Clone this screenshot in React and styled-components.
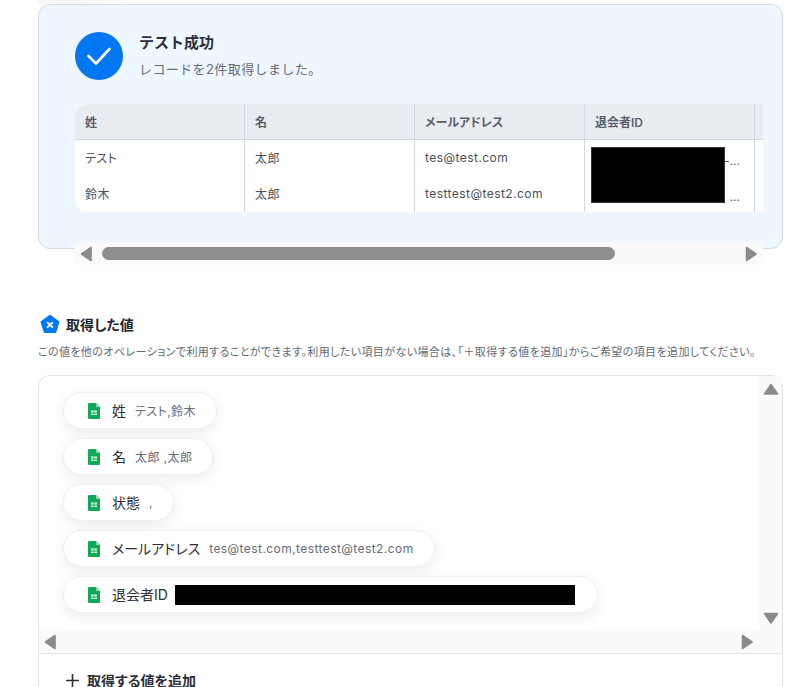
import React from "react";
import styled, { createGlobalStyle } from "styled-components";

const Global = createGlobalStyle`
  html, body { margin: 0; padding: 0; background: #fff; }
  body { font-family: Inter, "Noto Sans CJK JP", sans-serif; color: #2d3340; font-feature-settings: "palt"; }
  * { box-sizing: border-box; }
`;
const Page = styled.div`
  width: 808px; height: 687px; overflow: hidden; padding: 0 25px 0 38px;
`;
const TopShade = styled.div`
  height: 4px; width: 110px; background: linear-gradient(to right, #f6f6f6, #fafafa 70%, #fff);
`;
const Card = styled.section`
  position: relative; height: 245px; border: 1px solid #d3dbe5; border-radius: 12px;
  background: #eef6ff; padding: 27px 19px 0 36px;
`;
const Head = styled.div`display: flex; align-items: center; gap: 16px; height: 48px;`;
const CheckBadge = styled.div`
  width: 48px; height: 48px; border-radius: 50%; background: #0477f2;
  display: flex; align-items: center; justify-content: center;
`;
const HeadText = styled.div`display: flex; flex-direction: column; gap: 6px;`;
const Title = styled.div`font-size: 15px; line-height: 20px; font-weight: 600; color: #2a2f3a; font-feature-settings: normal;`;
const Sub = styled.div`font-size: 13px; line-height: 20px; color: #666c78; letter-spacing: 0.4px; font-feature-settings: normal;`;
const TableWrap = styled.div`
  margin-top: 24px; width: 688px; height: 108px; overflow: hidden; background: #fff;
  border-radius: 12px 0 0 12px;
`;
const Row = styled.div`
  display: grid; grid-template-columns: repeat(4, 170px) 8px; height: ${p => p.$h}px;
  background: ${p => (p.$head ? "#e9ecf1" : "transparent")};
  border-bottom: ${p => (p.$head ? "1px solid #d3d9e2" : "0")};
`;
const Cell = styled.div`
  border-right: ${p => (p.$last ? "0" : "1px solid #d3d9e2")};
  padding: 0 0 ${p => (p.$head ? 1 : 2)}px 10px; font-size: 12px; display: flex; align-items: center;
  font-weight: ${p => (p.$head ? 600 : 400)};
  color: ${p => (p.$head ? "#5a606b" : "#4b505b")};
  letter-spacing: ${p => (p.$head ? 0 : 0.45)}px;
`;
const Ellipsis = styled(Cell)`justify-content: flex-end; padding: 4px 14px 0 0; color: #555b66; letter-spacing: 0;`;
const Redact = styled.div`
  position: absolute; left: 552px; top: 142px; width: 134px; height: 56px; background: #000;
  border: 1px solid #333;
`;
const HBar = styled.div`
  display: flex; align-items: center; background: #fafafa; height: 23px;
  padding: 0 5px 0 5px; gap: 9px;
`;
const CardBar = styled(HBar)`position: absolute; left: 36px; top: 237px; width: 688px;`;
const Thumb = styled.div`height: 13px; width: 513px; border-radius: 7px; background: #8e8e8e;`;
const Spacer = styled.div`flex: 1;`;
const Section = styled.section`margin-top: 64px;`;
const SectionHead = styled.div`display: flex; align-items: center; gap: 6px; padding-left: 2px; height: 22px;`;
const SectionTitle = styled.div`font-size: 14px; font-weight: 600; color: #22262e;`;
const Desc = styled.p`
  margin: 9px 0 0; font-size: 11px; line-height: 16px; color: #636975; white-space: nowrap; letter-spacing: 0.4px;
`;
const Box = styled.div`
  margin-top: 15px; border: 1px solid #e2e4e8; border-bottom: 0; border-radius: 12px 12px 0 0; height: 320px;
`;
const Scroller = styled.div`display: flex; height: 254px;`;
const Pills = styled.div`
  flex: 1; display: flex; flex-direction: column; align-items: flex-start; gap: 9px; padding: 16px 0 0 24px;
`;
const Pill = styled.div`
  display: flex; align-items: center; height: 37px; border: 1px solid #eef0f4; border-radius: 19px;
  background: #fff; padding: 0 20px 0 24px; box-shadow: 0 4px 14px rgba(40, 50, 80, 0.09); white-space: nowrap;
`;
const PillName = styled.span`font-size: 14px; color: #2b2f37; margin-left: 12px; padding-bottom: 2px;`;
const PillValue = styled.span`font-size: 12px; color: #666c78; margin-left: 9px; letter-spacing: 0.43px;`;
const PillRedact = styled.span`display: block; width: 400px; height: 20px; background: #000; margin: 1px 2px 0 7px;`;
const VBar = styled.div`
  width: 23px; background: #fafafa; display: flex; flex-direction: column; align-items: center;
  justify-content: space-between; padding: 7px 0 5px;
`;
const BoxBar = styled(HBar)`height: 24px; padding: 0 28px 0 5px; border-bottom: 1px solid #e2e4e8;`;
const AddRow = styled.div`
  display: flex; align-items: center; gap: 8px; padding: 16px 0 0 27px; font-size: 14px; font-weight: 600; color: #2b2f37;
`;

const Arrow = ({ dir }) => {
  const v = dir === "up" || dir === "down";
  const pts = {
    left: "11,1.5 11,14.5 1.5,8",
    right: "1.5,1.5 1.5,14.5 11,8",
    up: "8,1.5 14.5,11 1.5,11",
    down: "8,11 14.5,1.5 1.5,1.5",
  }[dir];
  return (
    <svg width={v ? 16 : 13} height={v ? 13 : 16} viewBox={v ? "0 0 16 13" : "0 0 13 16"} style={{ flex: "none" }}>
      <polygon points={pts} fill="#8a8a8a" stroke="#8a8a8a" strokeWidth="1.6" strokeLinejoin="round" />
    </svg>
  );
};
const Sheet = () => (
  <svg width="12" height="16" viewBox="0 0 12 16" style={{ flex: "none" }}>
    <path d="M1.2 0H8l4 4v10.8a1.2 1.2 0 0 1-1.2 1.2H1.2A1.2 1.2 0 0 1 0 14.8V1.2A1.2 1.2 0 0 1 1.2 0z" fill="#0fa958" />
    <path d="M8 0l4 4H8z" fill="#8ed6ab" />
    <path d="M3 7.5h6v4.5H3z" fill="#fff" />
    <path d="M3 9.2h6M3 10.6h6M6 7.5v4.5" stroke="#0fa958" strokeWidth=".7" />
  </svg>
);
const people = [["テスト", "太郎", "tes@test.com", "-..."], ["鈴木", "太郎", "testtest@test2.com", "..."]];

export default function App() {
  return (
    <Page>
      <Global />
      <TopShade />
      <Card>
        <Head>
          <CheckBadge>
            <svg width="26" height="20" viewBox="0 0 26 20"><path d="M2.5 10l7.5 7.5L23.5 3" fill="none" stroke="#fff" strokeWidth="2.6" strokeLinecap="round" strokeLinejoin="round" /></svg>
          </CheckBadge>
          <HeadText>
            <Title>テスト成功</Title>
            <Sub>レコードを2件取得しました。</Sub>
          </HeadText>
        </Head>
        <TableWrap>
          <Row $head $h={36}>
            {["姓", "名", "メールアドレス", "退会者ID"].map(h => <Cell $head key={h}>{h}</Cell>)}
            <Cell $last $head />
          </Row>
          {people.map((r, i) => (
            <Row $h={36} key={i}>
              <Cell>{r[0]}</Cell><Cell>{r[1]}</Cell><Cell>{r[2]}</Cell>
              <Ellipsis>{r[3]}</Ellipsis><Cell $last />
            </Row>
          ))}
        </TableWrap>
        <Redact />
        <CardBar><Arrow dir="left" /><Thumb /><Spacer /><Arrow dir="right" /></CardBar>
      </Card>
      <Section>
        <SectionHead>
          <svg width="20" height="20" viewBox="0 0 20 20" style={{ flex: "none" }}>
            <polygon points="10,1.8 18.5,8 15.3,18 4.7,18 1.5,8" fill="#0477f2" stroke="#0477f2" strokeWidth="2" strokeLinejoin="round" />
            <path d="M7.6 8.6l4.8 4.6M12.4 8.6l-4.8 4.6" stroke="#fff" strokeWidth="1.8" strokeLinecap="round" />
          </svg>
          <SectionTitle>取得した値</SectionTitle>
        </SectionHead>
        <Desc>この値を他のオペレーションで利用することができます。利用したい項目がない場合は、「＋取得する値を追加」からご希望の項目を追加してください。</Desc>
        <Box>
          <Scroller>
            <Pills>
              <Pill><Sheet /><PillName>姓</PillName><PillValue>テスト,鈴木</PillValue></Pill>
              <Pill><Sheet /><PillName>名</PillName><PillValue>太郎 ,太郎</PillValue></Pill>
              <Pill><Sheet /><PillName>状態</PillName><PillValue>,</PillValue></Pill>
              <Pill><Sheet /><PillName>メールアドレス</PillName><PillValue>tes@test.com,testtest@test2.com</PillValue></Pill>
              <Pill><Sheet /><PillName>退会者ID</PillName><PillRedact /></Pill>
            </Pills>
            <VBar><Arrow dir="up" /><Arrow dir="down" /></VBar>
          </Scroller>
          <BoxBar><Arrow dir="left" /><Spacer /><Arrow dir="right" /></BoxBar>
          <AddRow>
            <svg width="13" height="13" viewBox="0 0 13 13"><path d="M6.5 0v13M0 6.5h13" stroke="#2b2f37" strokeWidth="1.6" /></svg>
            取得する値を追加
          </AddRow>
        </Box>
      </Section>
    </Page>
  );
}
